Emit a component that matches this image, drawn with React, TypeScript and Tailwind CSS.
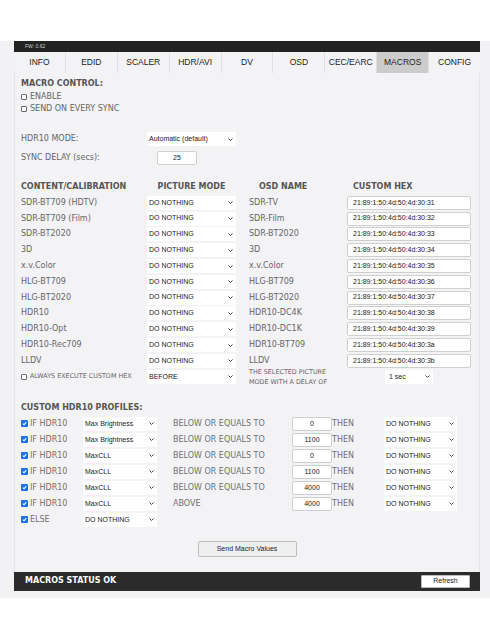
import React from "react";

const Chevron = () => (
  <svg width="5" height="3" viewBox="0 0 5 3" className="shrink-0">
    <polyline points="0.5,0.5 2.5,2.5 4.5,0.5" fill="none" stroke="#444" strokeWidth="1" />
  </svg>
);

function Sel({ text, className }: { text: string; className: string }) {
  return (
    <div
      className={
        "flex items-center justify-between bg-white h-[14px] pl-[2px] pr-[3px] text-[7px] text-[#222] font-['Liberation_Sans',Arial,sans-serif] " +
        className
      }
    >
      <span className="whitespace-nowrap">{text}</span>
      <Chevron />
    </div>
  );
}

function Box({ text, className }: { text: string; className: string }) {
  return (
    <div
      className={
        "flex items-center bg-white border border-[#cfcfcf] rounded-[2px] h-[14px] text-[7px] text-[#222] font-['Liberation_Sans',Arial,sans-serif] " +
        className
      }
    >
      {text}
    </div>
  );
}

const Unchecked = () => (
  <span className="inline-block w-[6px] h-[6px] border border-[#6b6b6b] bg-white rounded-[1px] shrink-0" />
);

const Checked = () => (
  <span className="flex items-center justify-center w-[7px] h-[7px] bg-[#1a73e8] rounded-[1px] shrink-0">
    <svg width="5" height="5" viewBox="0 0 5 5">
      <polyline points="0.8,2.6 2,3.8 4.3,1.1" fill="none" stroke="#fff" strokeWidth="1.1" />
    </svg>
  </span>
);

const tabs = ["INFO", "EDID", "SCALER", "HDR/AVI", "DV", "OSD", "CEC/EARC", "MACROS", "CONFIG"];

const rows = [
  ["SDR-BT709 (HDTV)", "SDR-TV", "21:89:1:50:4d:50:4d:30:31"],
  ["SDR-BT709 (Film)", "SDR-Film", "21:89:1:50:4d:50:4d:30:32"],
  ["SDR-BT2020", "SDR-BT2020", "21:89:1:50:4d:50:4d:30:33"],
  ["3D", "3D", "21:89:1:50:4d:50:4d:30:34"],
  ["x.v.Color", "x.v.Color", "21:89:1:50:4d:50:4d:30:35"],
  ["HLG-BT709", "HLG-BT709", "21:89:1:50:4d:50:4d:30:36"],
  ["HLG-BT2020", "HLG-BT2020", "21:89:1:50:4d:50:4d:30:37"],
  ["HDR10", "HDR10-DC4K", "21:89:1:50:4d:50:4d:30:38"],
  ["HDR10-Opt", "HDR10-DC1K", "21:89:1:50:4d:50:4d:30:39"],
  ["HDR10-Rec709", "HDR10-BT709", "21:89:1:50:4d:50:4d:30:3a"],
  ["LLDV", "LLDV", "21:89:1:50:4d:50:4d:30:3b"],
];

const profiles = [
  ["Max Brightness", "BELOW OR EQUALS TO", "0"],
  ["Max Brightness", "BELOW OR EQUALS TO", "1100"],
  ["MaxCLL", "BELOW OR EQUALS TO", "0"],
  ["MaxCLL", "BELOW OR EQUALS TO", "1100"],
  ["MaxCLL", "BELOW OR EQUALS TO", "4000"],
  ["MaxCLL", "ABOVE", "4000"],
];

export default function App() {
  return (
    <div className="w-[490px] h-[640px] bg-white font-['DejaVu_Sans',sans-serif]">
      <div className="h-[41px]" />
      <div className="bg-[#f2f1f4] pl-[14px] pr-[10px] pb-[7px]">
        <div className="h-[11px] bg-[#232323] flex items-center pl-[11px]">
          <span className="text-[5px] text-[#d0d0d0] font-['Liberation_Sans',Arial,sans-serif]">FW: 0.62</span>
        </div>
        <div className="flex h-[21px] bg-[#f3f2f5]">
          {tabs.map((t, i) => (
            <div
              key={t}
              className={
                "flex-1 flex items-center justify-center text-[8.5px] text-[#222] font-['Liberation_Sans',Arial,sans-serif] " +
                (t === "MACROS" ? "bg-[#cccccc] " : "") +
                (i < tabs.length - 1 ? "border-r border-[#e0dfe2]" : "")
              }
            >
              {t}
            </div>
          ))}
        </div>
        <div className="bg-[#f3f2f5] border-x border-[#e4e3e6] pl-[6px] pt-[5px] pb-[15px] text-[8px] text-[#666]">
          <div className="h-[12px] flex items-center font-bold text-[#555]">MACRO CONTROL:</div>
          <div className="mt-[1px] h-[12px] flex items-center gap-[3px]">
            <Unchecked />
            <span>ENABLE</span>
          </div>
          <div className="h-[12px] flex items-center gap-[3px]">
            <Unchecked />
            <span>SEND ON EVERY SYNC</span>
          </div>

          <div className="mt-[17px] h-[14px] flex items-center">
            <div className="w-[126px]">HDR10 MODE:</div>
            <Sel text="Automatic (default)" className="w-[89px]" />
          </div>
          <div className="mt-[5px] h-[14px] flex items-center">
            <div className="w-[126px]">SYNC DELAY (secs):</div>
            <Box text="25" className="ml-[10px] w-[40px] justify-center" />
          </div>

          <div className="mt-[16px] h-[12px] flex items-center font-bold text-[#555]">
            <div className="w-[126px]">CONTENT/CALIBRATION</div>
            <div className="w-[89px] text-center">PICTURE MODE</div>
            <div className="ml-[13px] w-[98px] pl-[10px]">OSD NAME</div>
            <div className="w-[124px] pl-[6px]">CUSTOM HEX</div>
          </div>
          <div className="mt-[2px]">
            {rows.map((r) => (
              <div key={r[0]} className="h-[15.8px] flex items-center">
                <div className="w-[126px] whitespace-nowrap">{r[0]}</div>
                <Sel text="DO NOTHING" className="w-[89px]" />
                <div className="ml-[13px] w-[98px] whitespace-nowrap">{r[1]}</div>
                <Box text={r[2]} className="w-[124px] pl-[5px]" />
              </div>
            ))}
          </div>
          <div className="h-[16px] flex items-center">
            <div className="w-[126px] flex items-center gap-[3px] text-[6.4px]">
              <Unchecked />
              <span className="whitespace-nowrap">ALWAYS EXECUTE CUSTOM HEX</span>
            </div>
            <Sel text="BEFORE" className="w-[89px]" />
            <div className="ml-[13px] w-[136px] text-[6.4px] leading-[10px]">
              <div>THE SELECTED PICTURE</div>
              <div>MODE WITH A DELAY OF</div>
            </div>
            <Sel text="1 sec" className="w-[48px] pl-[4px]" />
          </div>

          <div className="mt-[17px] h-[12px] flex items-center font-bold text-[#555]">CUSTOM HDR10 PROFILES:</div>
          <div className="mt-[2px] text-[#707070]">
            {profiles.map((p, i) => (
              <div key={i} className="h-[16px] flex items-center">
                <div className="w-[62px] flex items-center gap-[2px]">
                  <Checked />
                  <span>IF HDR10</span>
                </div>
                <Sel text={p[0]} className="w-[74px]" />
                <div className="ml-[16px] w-[119px] whitespace-nowrap">{p[1]}</div>
                <Box text={p[2]} className="w-[40px] justify-center" />
                <div className="w-[52px]">THEN</div>
                <Sel text="DO NOTHING" className="w-[73px]" />
              </div>
            ))}
            <div className="h-[16px] flex items-center">
              <div className="w-[62px] flex items-center gap-[2px]">
                <Checked />
                <span>ELSE</span>
              </div>
              <Sel text="DO NOTHING" className="w-[74px]" />
            </div>
          </div>

          <div className="mt-[13px] flex justify-center pr-[6px]">
            <div className="w-[99px] h-[16px] flex items-center justify-center bg-[#efefef] border border-[#bdbdbd] rounded-[2px] text-[7px] text-[#222] font-['Liberation_Sans',Arial,sans-serif]">
              Send Macro Values
            </div>
          </div>
        </div>
        <div className="h-[19px] bg-[#2b2b2b] flex items-center justify-between pl-[11px] pr-[10px]">
          <span className="text-[8px] font-bold text-white">MACROS STATUS OK</span>
          <div className="w-[49px] h-[13px] bg-white border border-[#bbb] rounded-[1px] flex items-center justify-center text-[7px] text-[#222] font-['Liberation_Sans',Arial,sans-serif]">
            Refresh
          </div>
        </div>
      </div>
    </div>
  );
}
